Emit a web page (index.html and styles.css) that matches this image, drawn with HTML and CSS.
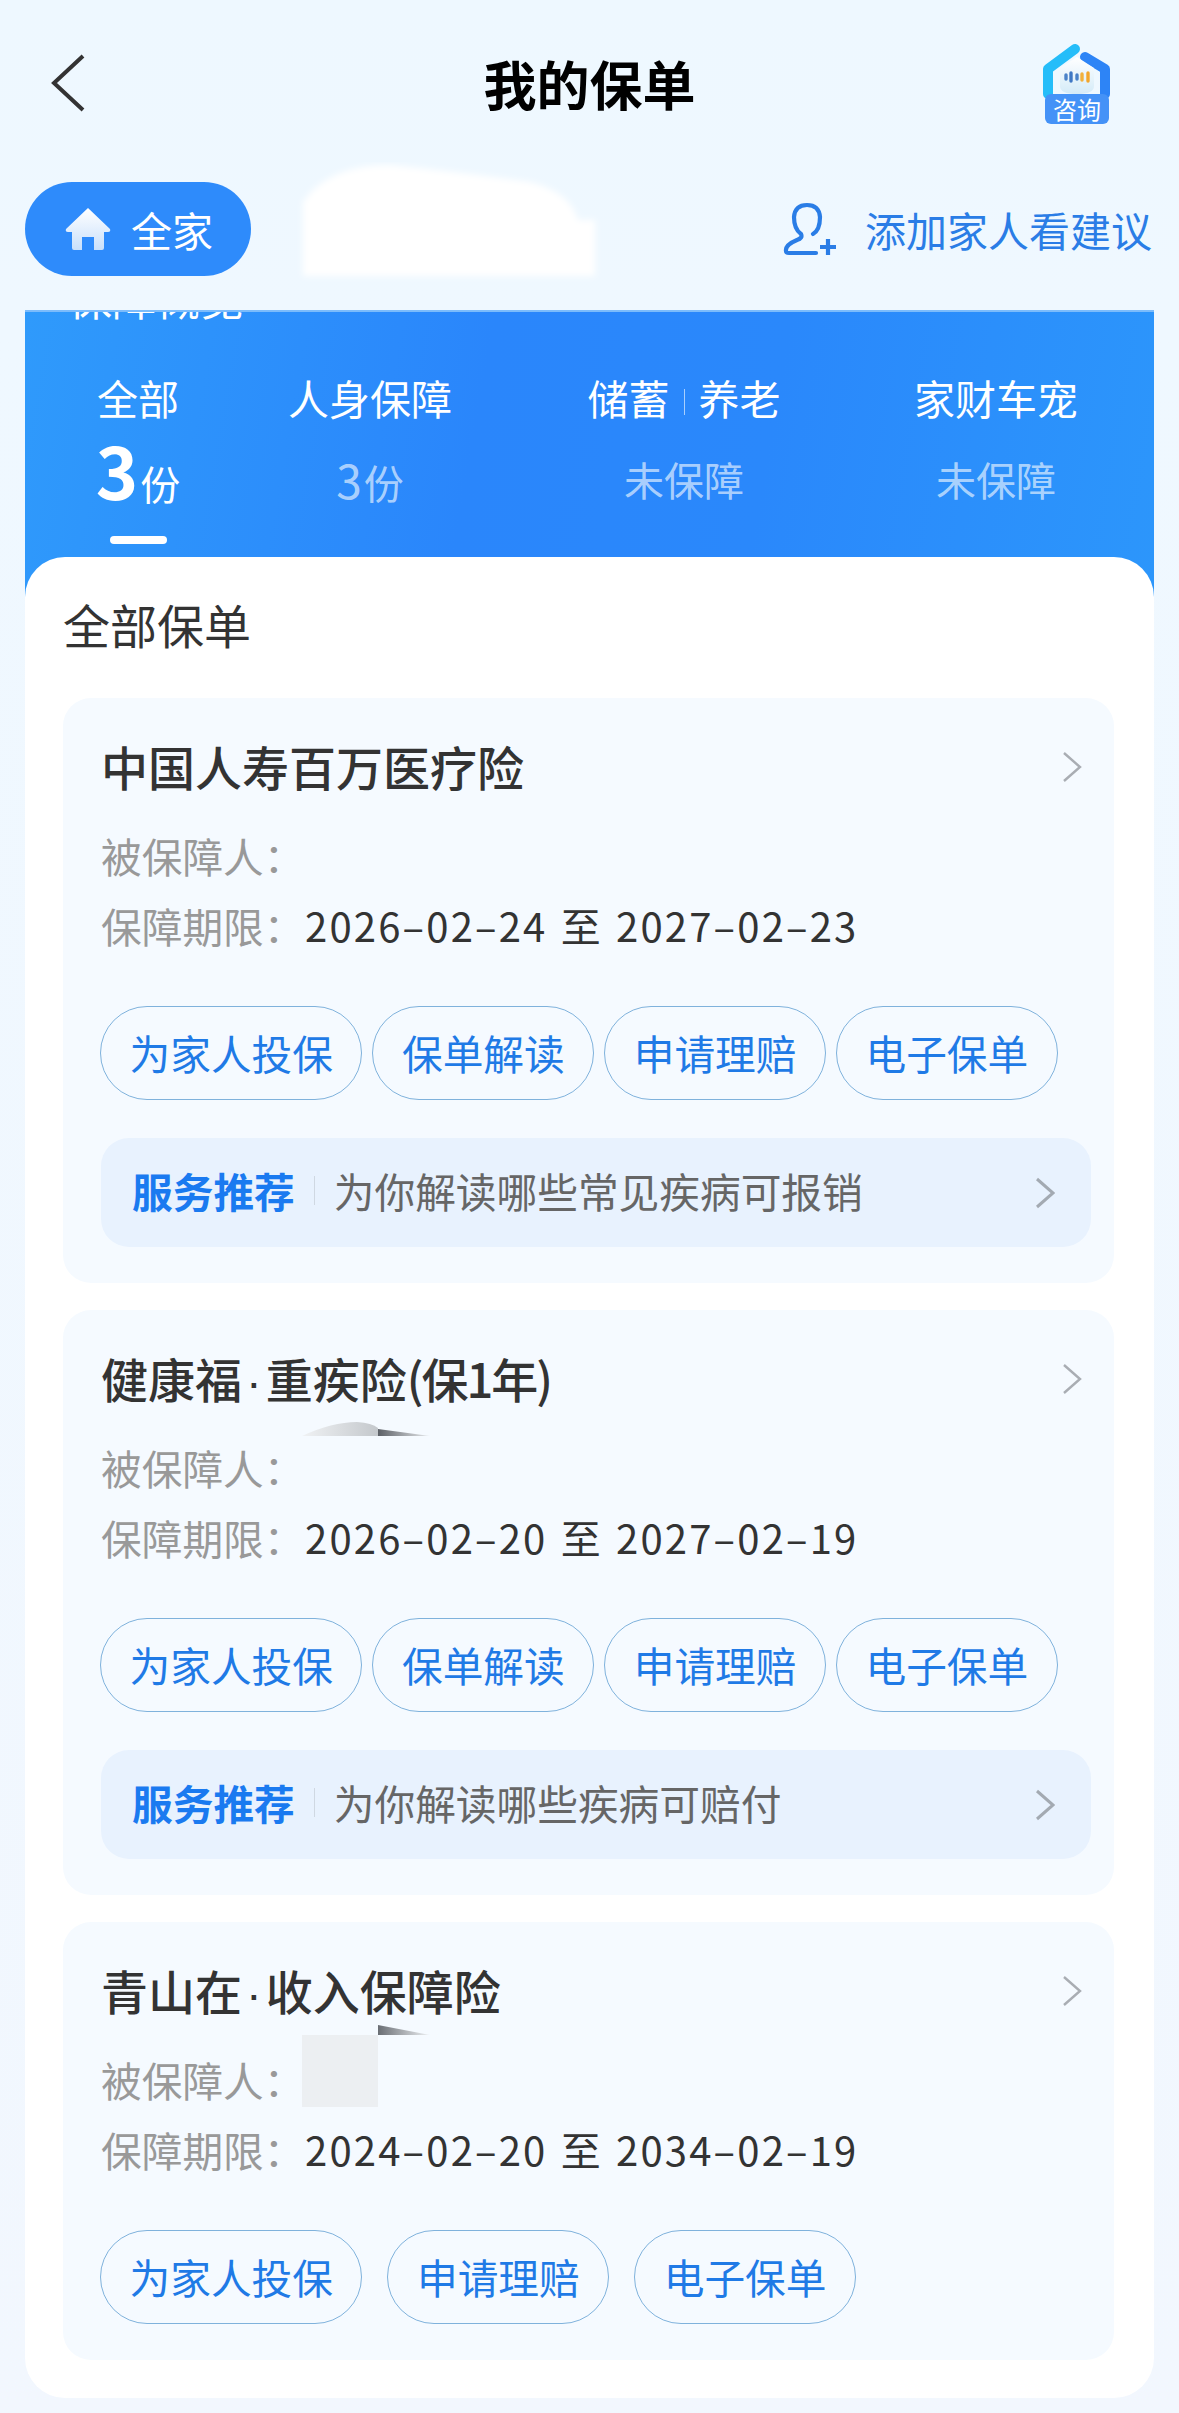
FILE: index.html
```html
<!DOCTYPE html>
<html lang="zh-CN">
<head>
    <meta charset="UTF-8">
    <meta name="viewport" content="width=device-width, initial-scale=1.0">
    <title>我的保单</title>
    <link rel="stylesheet" href="styles.css">
</head>
<body>
    <div id="page">
        <div class="nav">
            <svg class="nav-back" width="36" height="58" viewBox="0 0 36 58"><path d="M33 2 L4 29 L33 56" fill="none" stroke="#333" stroke-width="4"/></svg>
            <h1 class="nav-title">我的保单</h1>
            <div class="consult">
                <svg width="70" height="60" viewBox="0 0 70 60">
                    <defs>
                        <linearGradient id="roomFill" x1="0" y1="0" x2="0" y2="1"><stop offset="0" stop-color="#ffffff"/><stop offset="1" stop-color="#d4ebf8"/></linearGradient>
                    </defs>
                    <path d="M6 52 V27 L33 7" fill="none" stroke="#25bdf9" stroke-width="10" stroke-linecap="round" stroke-linejoin="round"/>
                    <path d="M43 15 L63 27 V52" fill="none" stroke="#2d84f6" stroke-width="10" stroke-linecap="round" stroke-linejoin="round"/>
                    <path d="M35 15 L52 26 V44 Q52 52 35 52 Q18 52 18 44 V26 Z" fill="url(#roomFill)"/>
                    <g stroke-width="3.4" stroke-linecap="round">
                        <path d="M24 33 V37" stroke="#4a82c8"/>
                        <path d="M29 31 V39" stroke="#3f78c4"/>
                        <path d="M35 33 V37" stroke="#4a82c8"/>
                        <path d="M40 32 V38" stroke="#f2b13c"/>
                        <path d="M46 31 V39" stroke="#f2a62c"/>
                    </g>
                </svg>
                <span class="consult-badge">咨询</span>
            </div>
        </div>

        <div class="family">
            <div class="family-tab">
                <svg width="46" height="42" viewBox="0 0 46 42">
                    <defs>
                        <linearGradient id="homeFill" x1="0" y1="0" x2="0" y2="1"><stop offset="0" stop-color="#ffffff"/><stop offset="1" stop-color="#c9e0fb"/></linearGradient>
                    </defs>
                    <path d="M23 0 L45 21 Q46 24 43 24 H39 V40 Q39 42 37 42 H29 V29 H17 V42 H9 Q7 42 7 40 V24 H3 Q0 24 1 21 Z" fill="url(#homeFill)"/>
                </svg>
                <span>全家</span>
            </div>
            <svg class="family-mask" width="320" height="130" viewBox="0 0 320 130">
                <defs><filter id="soft"><feGaussianBlur stdDeviation="3"/></filter></defs>
                <path d="M15 40 Q40 3 102 3 Q170 10 242 20 Q282 30 290 58 H307 V114 H15 Z" fill="#ffffff" filter="url(#soft)"/>
            </svg>
            <div class="family-add">
                <svg width="54" height="54" viewBox="0 0 54 54">
                    <path d="M30 32 Q37 28 37 15 Q36 3 24 3 Q12 3 11 15 Q11 27 18 32 Q20 36 14 38 Q2 43 3 49 Q3 51 6 51 H33" fill="none" stroke="#2a7de6" stroke-width="4.2" stroke-linecap="round" stroke-linejoin="round"/>
                    <path d="M37 45 H53 M45 37 V53" fill="none" stroke="#2a7de6" stroke-width="4.2"/>
                </svg>
                <span>添加家人看建议</span>
            </div>
        </div>

        <div class="main">
            <div class="overview">
                <div class="overview-title">保障概览</div>
                <div class="tabs">
                    <div class="tab">
                        <div class="tab-name">全部</div>
                        <div class="tab-value tab-value-on"><b>3</b>份</div>
                        <div class="tab-line"></div>
                    </div>
                    <div class="tab">
                        <div class="tab-name">人身保障</div>
                        <div class="tab-value"><span class="tab-num">3</span>份</div>
                    </div>
                    <div class="tab">
                        <div class="tab-name">储蓄<i class="tab-sep"></i>养老</div>
                        <div class="tab-value">未保障</div>
                    </div>
                    <div class="tab">
                        <div class="tab-name">家财车宠</div>
                        <div class="tab-value">未保障</div>
                    </div>
                </div>
            </div>

            <div class="list">
                <h2 class="list-title">全部保单</h2>

                <div class="card">
                    <div class="card-head">
                        <span>中国人寿百万医疗险</span>
                        <svg class="arrow" width="20" height="32" viewBox="0 0 20 32"><path d="M2 2 L18 16 L2 30" fill="none" stroke="#a9adb3" stroke-width="2.4"/></svg>
                    </div>
                    <div class="info info-first"><span class="info-key">被保障人：</span></div>
                    <div class="info"><span class="info-key">保障期限：</span><span class="info-val">2026–02–24 至 2027–02–23</span></div>
                    <div class="btns">
                        <span class="btn">为家人投保</span>
                        <span class="btn">保单解读</span>
                        <span class="btn">申请理赔</span>
                        <span class="btn">电子保单</span>
                    </div>
                    <div class="service">
                        <b>服务推荐</b><i class="service-sep"></i><span>为你解读哪些常见疾病可报销</span>
                        <svg class="service-arrow" width="20" height="32" viewBox="0 0 20 32"><path d="M2 2 L18 16 L2 30" fill="none" stroke="#a3aab2" stroke-width="3"/></svg>
                    </div>
                </div>

                <div class="card">
                    <div class="card-head">
                        <span>健康福<em>·</em>重疾险<span class="tight">(保1年)</span></span>
                        <svg class="arrow" width="20" height="32" viewBox="0 0 20 32"><path d="M2 2 L18 16 L2 30" fill="none" stroke="#a9adb3" stroke-width="2.4"/></svg>
                    </div>
                    <div class="info info-first">
                        <span class="info-key">被保障人：</span>
                        <svg class="smudge smudge-a" width="130" height="18" viewBox="0 0 130 18">
                            <defs>
                                <linearGradient id="smudgeA" x1="0" y1="0" x2="1" y2="0"><stop offset="0" stop-color="#f0f2f4"/><stop offset="1" stop-color="#c4c8cc"/></linearGradient>
                                <linearGradient id="wedgeA" x1="0" y1="0" x2="1" y2="0"><stop offset="0" stop-color="#5c6066"/><stop offset="1" stop-color="#e8ebee"/></linearGradient>
                            </defs>
                            <path d="M0 16 Q30 2 55 2 Q70 3 76 8 V16 Z" fill="url(#smudgeA)"/>
                            <path d="M76 9 L128 16 H76 Z" fill="url(#wedgeA)"/>
                        </svg>
                    </div>
                    <div class="info"><span class="info-key">保障期限：</span><span class="info-val">2026–02–20 至 2027–02–19</span></div>
                    <div class="btns">
                        <span class="btn">为家人投保</span>
                        <span class="btn">保单解读</span>
                        <span class="btn">申请理赔</span>
                        <span class="btn">电子保单</span>
                    </div>
                    <div class="service">
                        <b>服务推荐</b><i class="service-sep"></i><span>为你解读哪些疾病可赔付</span>
                        <svg class="service-arrow" width="20" height="32" viewBox="0 0 20 32"><path d="M2 2 L18 16 L2 30" fill="none" stroke="#a3aab2" stroke-width="3"/></svg>
                    </div>
                </div>

                <div class="card">
                    <div class="card-head">
                        <span>青山在<em>·</em>收入保障险</span>
                        <svg class="arrow" width="20" height="32" viewBox="0 0 20 32"><path d="M2 2 L18 16 L2 30" fill="none" stroke="#a9adb3" stroke-width="2.4"/></svg>
                    </div>
                    <div class="info info-first">
                        <span class="info-key">被保障人：</span>
                        <svg class="smudge smudge-b" width="130" height="84" viewBox="0 0 130 84">
                            <defs>
                                <linearGradient id="wedgeB" x1="0" y1="0" x2="1" y2="0"><stop offset="0" stop-color="#6a6e74"/><stop offset="1" stop-color="#eef1f4"/></linearGradient>
                            </defs>
                            <path d="M76 0 L128 10 H76 Z" fill="url(#wedgeB)"/>
                            <rect x="0" y="10" width="76" height="72" fill="#eceff2"/>
                        </svg>
                    </div>
                    <div class="info"><span class="info-key">保障期限：</span><span class="info-val">2024–02–20 至 2034–02–19</span></div>
                    <div class="btns btns-wide">
                        <span class="btn">为家人投保</span>
                        <span class="btn">申请理赔</span>
                        <span class="btn">电子保单</span>
                    </div>
                </div>
            </div>
        </div>
    </div>
</body>
</html>
```

FILE: styles.css
```css
* {
    box-sizing: border-box;
}
html, body {
    margin: 0;
    padding: 0;
}
body {
    font-family: "Noto Sans CJK SC", "Noto Sans", sans-serif;
    background-color: #f2f7fe;
}
#page {
    width: 1179px;
    height: 2413px;
    overflow: hidden;
    background: linear-gradient(180deg, #eef8ff 0, #eff8ff 320px, #f2f7fe 100%);
}

/* top bar */
.nav {
    height: 165px;
    padding: 0 67px;
    display: grid;
    grid-template-columns: 1fr auto 1fr;
    align-items: center;
}
.nav-back {
    margin-left: -17px;
}
.nav-title {
    margin: 0;
    font-size: 53px;
    font-weight: 700;
    color: #000;
}
.consult {
    position: relative;
    width: 70px;
    height: 82px;
    justify-self: end;
}
.consult svg {
    display: block;
}
.consult-badge {
    position: absolute;
    left: 3px;
    bottom: 0;
    width: 64px;
    height: 30px;
    border-radius: 6px;
    background-color: #4492f7;
    color: #fff;
    font-size: 24px;
    line-height: 30px;
    text-align: center;
}

/* family row */
.family {
    position: relative;
    height: 94px;
    margin: 17px 0 34px;
    padding: 0 27px 0 25px;
    display: flex;
    align-items: center;
}
.family-tab {
    width: 226px;
    height: 94px;
    padding-left: 40px;
    border-radius: 47px;
    background-color: #2e8bfb;
    color: #fff;
    font-size: 41px;
    display: flex;
    align-items: center;
    gap: 20px;
}
.family-mask {
    position: absolute;
    left: 288px;
    top: -20px;
}
.family-add {
    margin-left: auto;
    color: #2a7de6;
    font-size: 41px;
    display: flex;
    align-items: center;
    gap: 28px;
}

/* blue overview */
.main {
    margin: 0 25px;
}
.overview {
    height: 287px;
    overflow: hidden;
    border-top: 2px solid #7cbcfb;
    background: linear-gradient(100deg, #2f9afb 0, #2a86fb 40%, #2a88fb 65%, #2c96fb 100%);
    color: #fff;
}
.overview-title {
    margin-top: -35px;
    padding-left: 43px;
    font-size: 44px;
    line-height: 40px;
}
.tabs {
    margin-top: 50px;
    display: grid;
    grid-template-columns: 226px 238px 390px 234px;
}
.tab {
    text-align: center;
}
.tab-name {
    font-size: 41px;
    line-height: 60px;
}
.tab-sep {
    display: inline-block;
    width: 1px;
    height: 26px;
    margin: 0 14px;
    background-color: rgba(255, 255, 255, 0.6);
}
.tab-value {
    height: 84px;
    font-size: 40px;
    line-height: 104px;
    color: rgba(255, 255, 255, 0.62);
}
.tab-num {
    font-size: 46px;
    margin-right: 2px;
}
.tab-value-on {
    color: #fff;
}
.tab-value-on b {
    font-size: 72px;
    font-weight: 700;
    line-height: 84px;
    margin-right: 2px;
}
.tab-line {
    width: 57px;
    height: 8px;
    margin: 25px auto 0;
    border-radius: 4px;
    background-color: #fff;
}

/* policy list */
.list {
    margin-top: -40px;
    padding: 37px 40px 38px 38px;
    position: relative;
    border-radius: 40px;
    background-color: #fff;
}
.list-title {
    margin: 0 0 44px;
    font-size: 47px;
    font-weight: 400;
    line-height: 60px;
    color: #333;
}
.card {
    margin-bottom: 27px;
    padding: 37px 23px 36px 38px;
    border-radius: 28px;
    background-color: #f5faff;
}
.card:last-child {
    margin-bottom: 0;
}
.card-head {
    height: 60px;
    display: flex;
    align-items: center;
    justify-content: space-between;
    font-size: 47px;
    font-weight: 500;
    color: #333;
}
.card-head em {
    font-family: "Liberation Sans", sans-serif;
    font-style: normal;
    margin: 0 4px;
}
.tight {
    letter-spacing: -2px;
}
.arrow {
    margin: 4px 9px 0 0;
}
.info {
    position: relative;
    height: 70px;
    display: flex;
    align-items: center;
    font-size: 40.7px;
}
.info-first {
    margin-top: 25px;
}
.info-key {
    color: #999;
    width: 204px;
}
.info-val {
    color: #333;
    font-size: 40px;
    letter-spacing: 2.2px;
    word-spacing: 2px;
}
.smudge {
    position: absolute;
    left: 201px;
}
.smudge-a {
    top: -12px;
}
.smudge-b {
    top: -19px;
}
.btns {
    margin-top: 46px;
    margin-left: -1px;
    display: flex;
    gap: 10px;
}
.btns-wide {
    gap: 25px;
}
.btn {
    height: 94px;
    padding: 0 28.5px;
    border: 1.5px solid #7fb2dc;
    border-radius: 47px;
    color: #1f7ae6;
    font-size: 40.7px;
    line-height: 91px;
}
.service {
    height: 109px;
    margin-top: 38px;
    padding: 0 36px 4px 31px;
    border-radius: 28px;
    background-color: #e8f2fe;
    color: #666;
    font-size: 40.7px;
    display: flex;
    align-items: center;
}
.service b {
    color: #1a7af0;
    font-weight: 700;
}
.service-sep {
    width: 1px;
    height: 29px;
    margin: 0 19px;
    background-color: #cfd8e2;
}
.service-arrow {
    margin: 4px 0 0 auto;
}
```
